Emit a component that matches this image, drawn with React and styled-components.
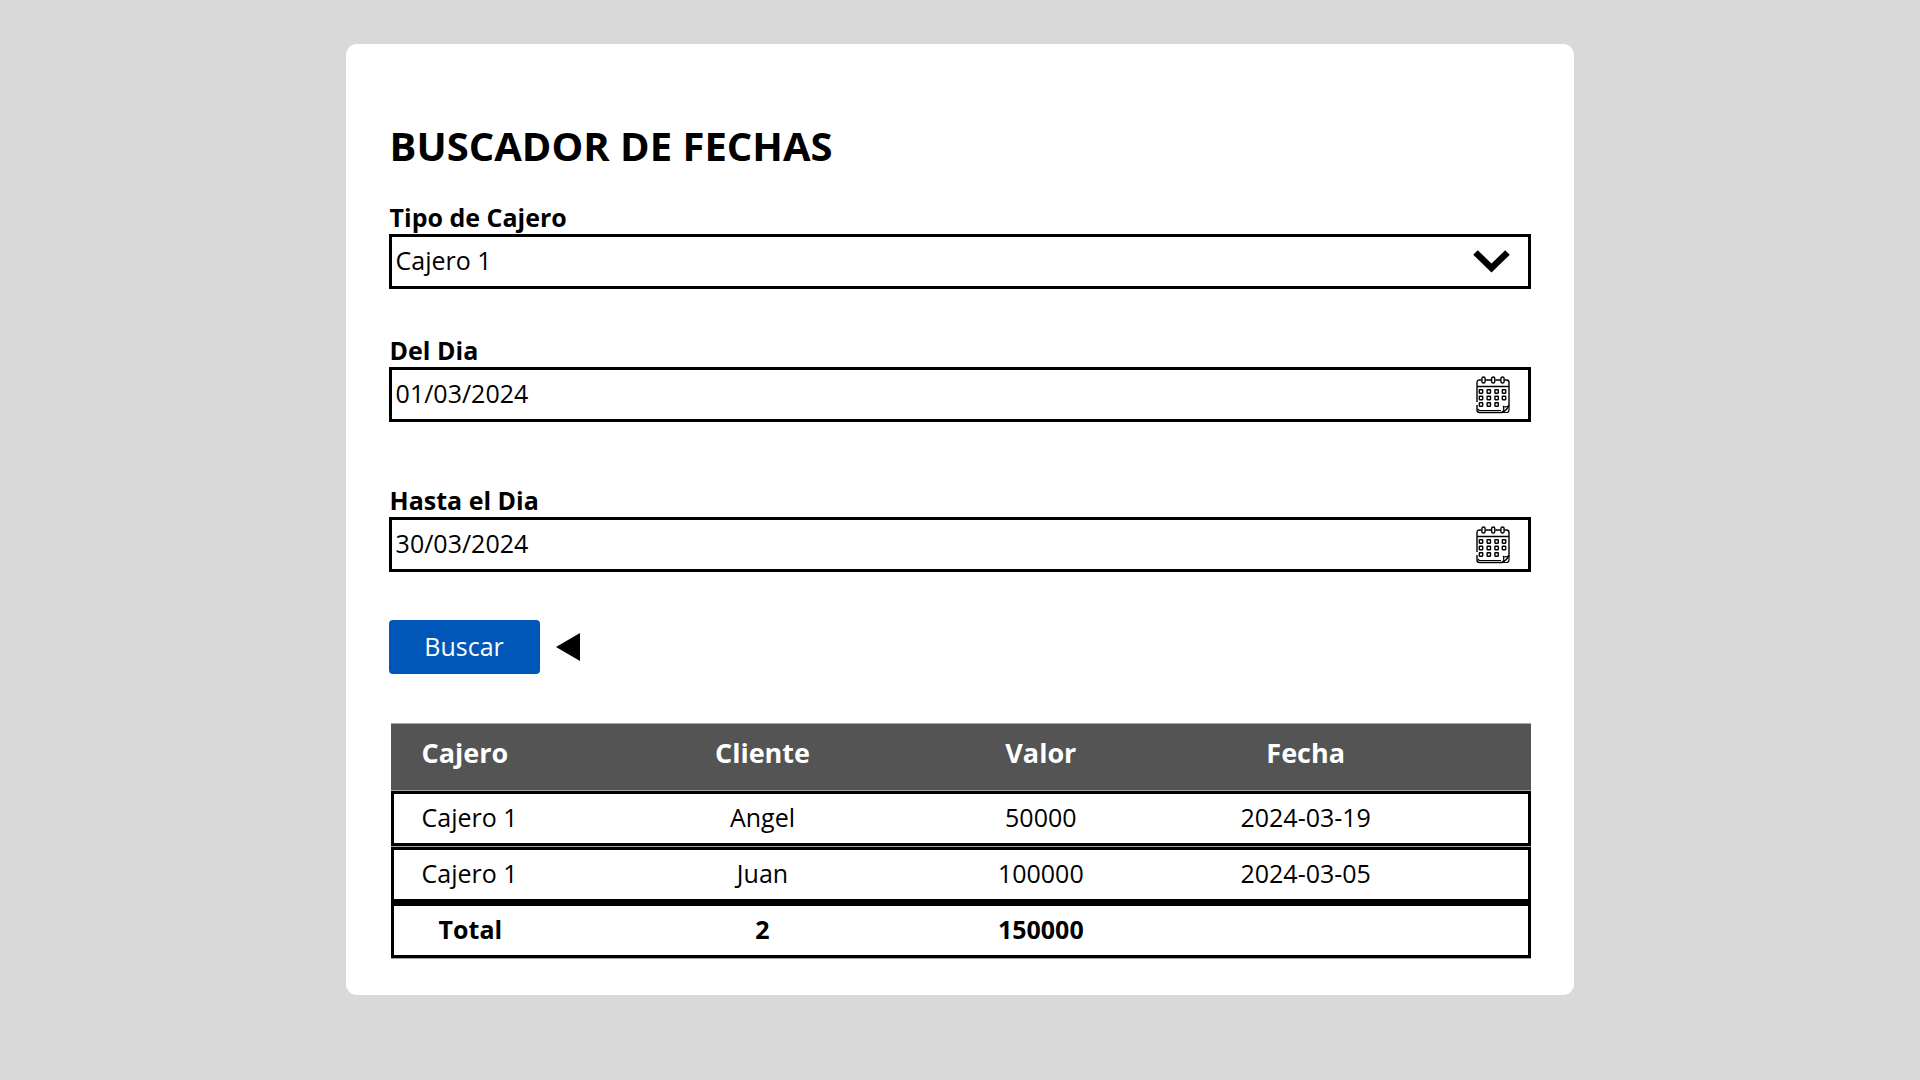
import React, { useState } from "react";
import styled, { createGlobalStyle } from "styled-components";

const GlobalStyle = createGlobalStyle`
  *, *::before, *::after { box-sizing: border-box; }
  body {
    margin: 0;
    background: #d9d9d9;
    color: #000;
    font-family: "Open Sans", "Noto Sans", sans-serif;
    font-size: 25px;
  }
`;

const Page = styled.main`
  min-height: 100vh;
  padding: 44px 18%;
`;

const Card = styled.section`
  display: flex;
  flex-direction: column;
  padding: 74px 43px 36px;
  background: #fff;
  border-radius: 11px;
`;

const Title = styled.h1`
  margin: 0 0 26px;
  padding-left: 1px;
  font-size: 40px;
  line-height: 56px;
  font-weight: 700;
`;

const Field = styled.div`
  display: flex;
  flex-direction: column;
  margin-bottom: ${(p) => p.$gap}px;
`;

const Label = styled.label`
  padding-left: 1px;
  font-weight: 700;
  line-height: 34px;
`;

const Box = styled.div`
  display: grid;
  grid-template-columns: 1fr;
  align-items: center;
  height: 55px;
  border: 3px solid #000;
`;

const controlStyles = `
  grid-area: 1 / 1;
  width: 100%;
  height: 49px;
  margin: 0;
  border: 0;
  padding: 0 60px 3px 4px;
  background: transparent;
  color: inherit;
  font: inherit;
  appearance: none;
  outline-offset: -2px;
`;

const Select = styled.select`${controlStyles}`;
const TextInput = styled.input`${controlStyles}`;

const Chevron = styled.svg`
  grid-area: 1 / 1;
  justify-self: end;
  margin-right: 18px;
  pointer-events: none;
`;

const IconButton = styled.button`
  grid-area: 1 / 1;
  justify-self: end;
  display: flex;
  margin: 0 18px 0 0;
  padding: 0;
  border: 0;
  background: none;
  color: inherit;
  cursor: pointer;
`;

const Actions = styled.div`
  display: flex;
  align-items: center;
  gap: 16px;
  margin-bottom: 49px;
`;

const SearchButton = styled.button`
  width: 151px;
  height: 54px;
  padding: 0 0 2px;
  border: 0;
  border-radius: 4px;
  background: #0057b7;
  color: #fff;
  font: inherit;
  cursor: pointer;
`;

const Table = styled.table`
  margin-left: 2px;
  table-layout: fixed;
  border-collapse: separate;
  border-spacing: 0 1px;
  background: #a6a6a6;
  line-height: 36px;
`;

const Col = styled.col`
  width: ${(p) => p.$width};
`;

const HeadCell = styled.th`
  height: 66px;
  padding: 0 0 8px;
  background: #545454;
  color: #fff;
  font-size: 27px;
  text-align: center;

  &:first-child { padding-left: 31px; text-align: left; }
  &:last-child { padding-right: 100px; }
`;

const Cell = styled.td`
  height: 55px;
  padding: 0 0 3px;
  border: solid #000;
  border-width: 3px 0;
  background: #fff;
  text-align: center;

  &:first-child { padding-left: 28px; border-left-width: 3px; text-align: left; }
  &:last-child { padding-right: 97px; border-right-width: 3px; }
`;

const TotalCell = styled(Cell)`
  font-weight: 700;
  box-shadow: 0 -1px #000;

  &:first-child { padding-left: 45px; }
`;

const CalendarIcon = () => (
  <svg width="34" height="38" viewBox="0 0 34 38" fill="none" stroke="currentColor" strokeWidth="1.4" aria-hidden="true">
    <path d="M5.500 4H3.500Q1 4 1 6.500V26M1 29V34Q1 36.500 3.500 36.500H26Q31 34 33 29.500V6.500Q33 4 30.500 4H28.500M9.500 4H15M19.500 4H24.500M1 10.500H33" />
    <path d="M2 33Q2.500 34.500 4 34.500H25M26 36.500Q28.500 34.500 27.500 30.500Q30.500 31.500 33 29.500M33 29.500V34Q33 36.500 30.500 36.500H26" strokeWidth="1.200" />
    {[7.5, 17.2, 26.5].map((x) => (
      <rect key={x} x={x - 1.6} y="1" width="3.200" height="6" rx="1.600" />
    ))}
    {[15.5, 22, 28.5].map((y, row) =>
      [5, 12.8, 20.6, 28].slice(0, row === 2 ? 3 : 4).map((x) => (
        <rect key={`${x}-${y}`} x={x - 1.7} y={y - 1.7} width="3.400" height="3.400" rx="0.400" />
      ))
    )}
  </svg>
);

const ROWS = [
  ["Cajero 1", "Angel", "50000", "2024-03-19"],
  ["Cajero 1", "Juan", "100000", "2024-03-05"],
];

function DateField({ id, label, initial, gap }) {
  const [value, setValue] = useState(initial);
  return (
    <Field $gap={gap}>
      <Label htmlFor={id}>{label}</Label>
      <Box>
        <TextInput id={id} type="text" value={value} onChange={(e) => setValue(e.target.value)} />
        <IconButton type="button" aria-label={`Calendario: ${label}`}>
          <CalendarIcon />
        </IconButton>
      </Box>
    </Field>
  );
}

export default function App() {
  return (
    <>
      <GlobalStyle />
      <Page>
        <Card>
          <Title>BUSCADOR DE FECHAS</Title>
          <Field $gap={44}>
            <Label htmlFor="tipo">Tipo de Cajero</Label>
            <Box>
              <Select id="tipo" defaultValue="Cajero 1">
                <option>Cajero 1</option>
              </Select>
              <Chevron width="37" height="23" viewBox="0 0 37 23" fill="none" stroke="#000" strokeWidth="6.500" aria-hidden="true">
                <path d="M2.500 2.500L18.500 18L34.500 2.500" />
              </Chevron>
            </Box>
          </Field>
          <DateField id="desde" label="Del Dia" initial="01/03/2024" gap={61} />
          <DateField id="hasta" label="Hasta el Dia" initial="30/03/2024" gap={48} />
          <Actions>
            <SearchButton type="button">Buscar</SearchButton>
            <svg width="24" height="28" viewBox="0 0 24 28" aria-hidden="true">
              <path d="M0 14L24 0V28Z" />
            </svg>
          </Actions>
          <Table>
            <colgroup>
              <Col $width="20.4%" />
              <Col $width="24.4%" />
              <Col $width="24.4%" />
              <Col />
            </colgroup>
            <thead>
              <tr>
                {["Cajero", "Cliente", "Valor", "Fecha"].map((name) => (
                  <HeadCell key={name} scope="col">{name}</HeadCell>
                ))}
              </tr>
            </thead>
            <tbody>
              {ROWS.map((row) => (
                <tr key={row[3]}>
                  {row.map((text, i) => <Cell key={i}>{text}</Cell>)}
                </tr>
              ))}
            </tbody>
            <tfoot>
              <tr>
                <TotalCell as="th" scope="row">Total</TotalCell>
                <TotalCell>2</TotalCell>
                <TotalCell>150000</TotalCell>
                <TotalCell />
              </tr>
            </tfoot>
          </Table>
        </Card>
      </Page>
    </>
  );
}
